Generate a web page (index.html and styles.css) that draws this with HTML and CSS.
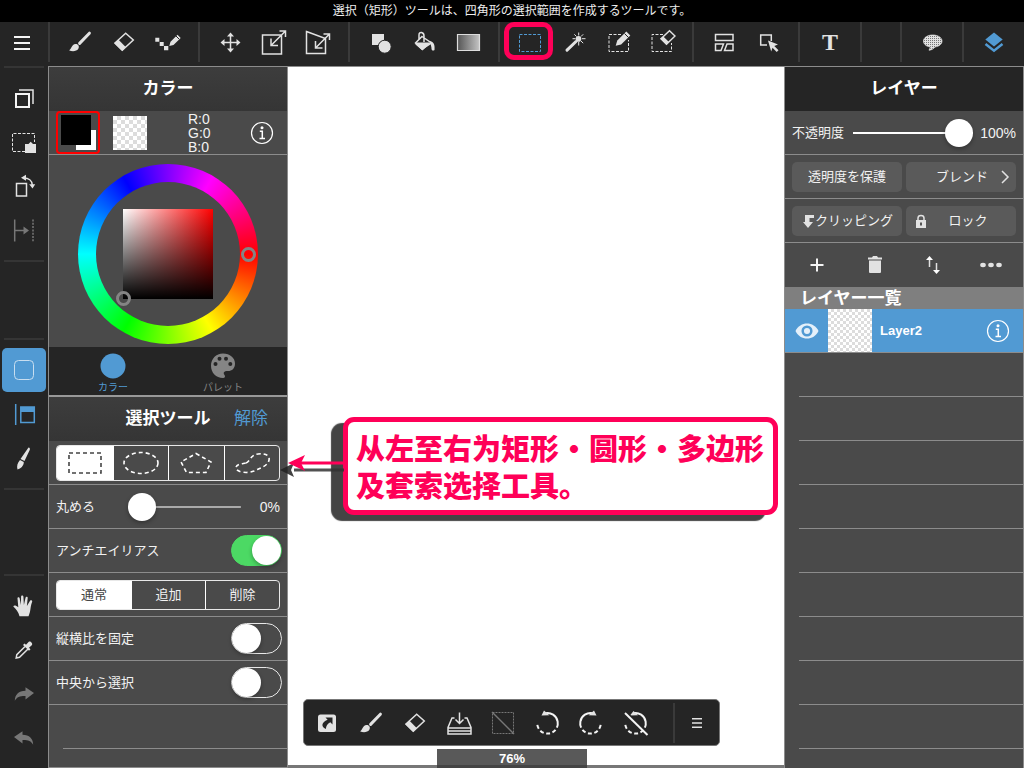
FILE: index.html
```html
<!DOCTYPE html>
<html lang="ja">
<head>
<meta charset="utf-8">
<meta name="viewport" content="width=device-width, initial-scale=1">
<title>選択ツール</title>
<link rel="stylesheet" href="styles.css">
</head>
<body>
<svg class="defs" aria-hidden="true">
  <defs>
    <linearGradient id="fade"><stop offset="0" stop-color="#555"/><stop offset="1" stop-color="#c4c4c4"/></linearGradient>
    <pattern id="dots" width="2" height="2" patternUnits="userSpaceOnUse"><rect width="2" height="2" fill="#e2e2e2"/><rect width="1" height="1" fill="#777"/></pattern>
    <symbol id="brush" viewBox="0 0 28 28"><path class="s3" d="M23.4 5.2 13.6 15.4"/><path class="f" d="M3 22.3c2.6-.6 2.3-6 6.6-6.3 2.7-.1 4.2 2.5 2.6 5-1.6 2.300-5.800 2.800-9.200 1.300z"/></symbol>
    <symbol id="eraser" viewBox="0 0 28 28"><path class="s" d="M15.700 5.200 23.300 12 12.300 22.300 5 15z"/><path class="f" d="M8.500 11.700 15.700 19 12.200 23 4.200 15.300z"/></symbol>
    <symbol id="info" viewBox="0 0 24 24"><circle cx="12" cy="12" r="10.500" fill="none" stroke="#fff" stroke-width="1.200"/><circle cx="12" cy="6.800" r="1.500" fill="#fff"/><path d="M9.800 10.200h2.500V17.500M9.500 17.500h5.500" fill="none" stroke="#fff" stroke-width="1.500"/></symbol>
    <symbol id="undo" viewBox="0 0 28 28"><path d="M4 13 12.500 7.300v3.400c7 .2 10.500 3.800 10.700 10-2.200-3.800-5.200-4.800-10.700-4.700v3.500z" fill="#777"/></symbol>
  </defs>
</svg>
<div class="app">
  <p class="status">選択（矩形）ツールは、四角形の選択範囲を作成するツールです。</p>
  <nav class="toolbar" aria-label="ツール">
    <div class="group menu">
      <button class="tool" aria-label="メニュー"><svg viewBox="0 0 28 28"><path class="s w" d="M6 9h16M6 15h16M6 21h16"/></svg></button>
    </div>
    <div class="group">
      <button class="tool" aria-label="ブラシ"><svg><use href="#brush"/></svg></button>
      <button class="tool" aria-label="消しゴム"><svg><use href="#eraser"/></svg></button>
      <button class="tool" aria-label="ドット"><svg viewBox="0 0 28 28"><path class="f" d="M1.300 9.700h4v4h-4zM5.700 14h4v4h-4zM10 18h4.300v4.300H10zM15.300 18l1.200-4.200 7-7 3.200 3.200-7.200 7z"/><path d="m22 8 3.200 3.200" stroke="#252525"/></svg></button>
    </div>
    <div class="group">
      <button class="tool" aria-label="移動"><svg viewBox="0 0 28 28"><path class="s" d="M14.500 7v15M7 14.500h15"/><path class="f" d="m14.500 4.500 3.500 4h-7zM14.500 24.500l3.500-4h-7zM4.500 14.500l4-3.500v7zM24.500 14.500l-4-3.500v7z"/></svg></button>
      <button class="tool" aria-label="拡大縮小"><svg viewBox="0 0 28 28"><path class="s" d="M2.500 7h19v19h-19zM11 17.500 25.500 3M19.500 3h6v6M11 10.500v7h7"/></svg></button>
      <button class="tool" aria-label="自由変形"><svg viewBox="0 0 28 28"><path class="s" d="M2.500 3.500 21.500 10.500v15h-19zM11.500 20 25.500 6M19.500 6h6v6M11.500 13v7h7"/></svg></button>
    </div>
    <div class="group">
      <button class="tool" aria-label="図形"><svg viewBox="0 0 28 28"><path class="f" d="M6 6h12v11H6z"/><circle cx="18.700" cy="18.700" r="6.500" fill="#e2e2e2" stroke="#252525"/></svg></button>
      <button class="tool" aria-label="バケツ"><svg viewBox="0 0 28 28"><path class="s" d="m12 8.500 9.500 6.500-9.500 6-6.500-6zM9 12V7c0-4 5-3 5 1v6"/><path class="f" d="M6 14.500h15l-8.500 8-7-6zM20 13c4 1 5 4 4.500 9-1.500 1.500-3.500 0-3-2z"/></svg></button>
      <button class="tool" aria-label="グラデーション"><svg viewBox="0 0 28 28"><path d="M3.500 6.500h22v16h-22z" fill="url(#fade)" stroke="#ddd" stroke-width="1.200"/></svg></button>
    </div>
    <div class="group">
      <button class="tool marked" aria-label="選択" aria-pressed="true"><svg viewBox="0 0 28 28"><path d="M3.500 6.500h21v17h-21z" fill="none" stroke="#519ad3" stroke-dasharray="3 1.500"/></svg></button>
      <button class="tool" aria-label="自動選択"><svg viewBox="0 0 28 28"><path class="s3" d="M7 22.200 16 13.500"/><path class="s t" d="M18.700 4.500v3M18.700 14v3.500M12.500 10.700h3M22 10.700h3.500M14.300 6.300l2.200 2.200M23.200 6.300 21 8.500M21 13l2.200 2.200"/><circle class="f" cx="18.500" cy="10.900" r="2.800"/></svg></button>
      <button class="tool" aria-label="選択ペン"><svg viewBox="0 0 28 28"><path class="s d" d="M17 6.500H5v17h19.500V12"/><path class="f" d="m11.700 17.700 1.600-5.200 9-9 4 4-9.200 9z"/><path d="m20.500 5.500 4 4" stroke="#252525"/></svg></button>
      <button class="tool" aria-label="選択消し"><svg viewBox="0 0 28 28"><path class="s d" d="M15 6.500H4v17h19.500V15"/><path class="s" d="M21.500 2.700 27 8l-8.500 8.300L13 10.700z"/><path class="f" d="m15.300 8.500 5.700 5.500-2.500 2.700-6-6z"/></svg></button>
    </div>
    <div class="group">
      <button class="tool" aria-label="コマ割り"><svg viewBox="0 0 28 28"><path class="s" d="M5.500 6.500h17.500v6H5.500zM5.500 16h8l-2.500 6.500H5.500zM17 16h6v6.500h-8.500z"/></svg></button>
      <button class="tool" aria-label="操作"><svg viewBox="0 0 28 28"><path class="s" d="M13 17H6.700V7h10.600v6"/><path class="f" d="m14 12.500 10 4-3.700 1.500 4.200 4.200-1.800 1.800-4.200-4.200-1.300 3.700z"/></svg></button>
    </div>
    <div class="group">
      <button class="tool letter">T</button>
    </div>
    <div class="group filler"></div>
    <div class="group">
      <button class="tool" aria-label="フキダシ"><svg viewBox="0 0 28 28"><path d="M14.700 7c5.200 0 9.300 2.600 9.300 6 0 3.300-3 5.300-7 6-1.500 2-3.500 3-6 3.200l1.500-3.200c-4-.5-7-2.600-7-6 0-3.400 4-6 9.200-6z" fill="url(#dots)" stroke="#e2e2e2" stroke-width=".7"/></svg></button>
    </div>
    <div class="group last">
      <button class="tool" aria-label="レイヤー"><svg viewBox="0 0 28 28"><path d="m14 4.500 8.700 7L14 18.500l-8.700-7z" fill="#519ad3"/><path d="m5.500 16 8.500 6.700 8.500-6.700" fill="none" stroke="#519ad3" stroke-width="2.500"/></svg></button>
    </div>
  </nav>
  <div class="main">
    <aside class="rail">
      <div class="stack">
        <button class="tool" aria-label="コピー"><svg viewBox="0 0 28 28"><path class="s w" d="M6 10h13v13H6z"/><path class="s" d="M9 6h14v14"/></svg></button>
        <button class="tool" aria-label="貼り付け"><svg viewBox="0 0 28 28"><path class="s d" d="M15 23.500H2.500v-18h22V14"/><path class="f" d="M15 16h3.500l2.200-2.200L23 16h3v9H15z"/></svg></button>
        <button class="tool" aria-label="回転"><svg viewBox="0 0 28 28"><path class="s" d="M6.500 11.500h10v12.500h-10zM14 6c4.500 0 8 2.500 8.300 7"/><path class="f" d="m11 5.800 5-3v6zM22.500 16.500l-3.300-4.300h6z"/></svg></button>
        <button class="tool dim" aria-label="スナップ"><svg viewBox="0 0 28 28"><path class="s" d="M4.700 3.500v22M5 14.500h9"/><path class="s" d="M23 3.500v22" stroke-dasharray="2 1.300"/><path class="f" d="m13.500 10.500 5.500 4-5.500 4z"/></svg></button>
      </div>
      <div class="gap-a"></div>
      <div class="stack">
        <button class="tool on" aria-label="選択範囲" aria-pressed="true"><svg viewBox="0 0 28 28"><rect x="4.500" y="4.500" width="19" height="19" rx="4" fill="none" stroke="#c8def0"/></svg></button>
        <button class="tool" aria-label="パネル"><svg viewBox="0 0 28 28"><path d="M5.700 4v21M10.800 7h13.500v15.500H10.800z" fill="none" stroke="#519ad3" stroke-width="1.500"/><path d="M10.500 7h14v5h-14z" fill="#519ad3"/></svg></button>
        <button class="tool" aria-label="ブラシ設定"><svg viewBox="0 0 28 28"><path class="f" d="M18.500 3.500c1.500 0 1.700 1.500 1.200 2.500L14.500 17l-4-2zM10 16l3.800 2c0 4-3 6.500-6.300 7.500-1-3.500 0-6.500 2.500-9.500z"/></svg></button>
      </div>
      <div class="gap-b"></div>
      <div class="stack">
        <button class="tool" aria-label="手のひら"><svg viewBox="0 0 28 28"><path class="f" d="M9.500 24.300C8.500 20 6 17 3.300 14.600c.5-1.600 2.500-1.300 5 .6L7.500 6.500C7.300 5 9.300 4.700 9.600 6l1.300 7 .2-8.500c0-1.500 2.200-1.500 2.300 0l.5 8.500 1.700-7.500c.3-1.400 2.300-1 2.100.4L16.900 14l3.300-5.400c.8-1 2.400-.2 2 1-1.500 4-1.500 6-2 9-.4 2.400-1 4-1.700 5.700z"/></svg></button>
        <button class="tool" aria-label="スポイト"><svg viewBox="0 0 28 28"><path class="s" d="M15 10.500 6.800 18.700 6.200 22l3.300-.7L18 13"/><path class="f" d="m13 9 1.500-1.500 1.500 1.200 2.800-3c1.500-1 4.200 1.600 3.200 3.200l-3 2.800 1.500 1.500-1.500 1.600z"/></svg></button>
        <button class="tool" aria-label="やり直す"><svg class="flip"><use href="#undo"/></svg></button>
        <button class="tool" aria-label="取り消す"><svg><use href="#undo"/></svg></button>
      </div>
    </aside>

    <aside class="panel left">
      <header class="head"><span></span><h2>カラー</h2><span></span></header>
      <div class="row swatches">
        <button class="current" aria-label="描画色"><span class="back"></span><span class="front"></span></button>
        <button class="clear checker" aria-label="透明"></button>
        <p class="rgb">R:0<br>G:0<br>B:0</p>
        <button class="round" aria-label="情報"><svg><use href="#info"/></svg></button>
      </div>
      <div class="picker">
        <div class="wheel">
          <div class="hole"><div class="square"><span class="knob sv"></span></div></div>
          <span class="knob hue"></span>
        </div>
      </div>
      <div class="tabs">
        <button class="tab active"><svg viewBox="0 0 28 28"><circle cx="14" cy="14" r="12.500" fill="#519ad3"/></svg>カラー</button>
        <button class="tab"><svg viewBox="0 0 28 28"><path d="M14 1.500c7 0 12 4.500 12 10 0 5-3 7.500-7 7.500-4.500 0-5 2-3.500 4 1 1.500.5 3-1.500 3-7 0-12-5.500-12-12.300C2 7 7 1.500 14 1.500z" fill="#858585"/><g fill="#252525"><circle cx="6.500" cy="12" r="2"/><circle cx="10.500" cy="6.700" r="2"/><circle cx="17" cy="6.700" r="2"/><circle cx="21.300" cy="12" r="2"/></g></svg>パレット</button>
      </div>
      <header class="head"><span></span><h2>選択ツール</h2><button class="release">解除</button></header>
      <div class="row">
        <div class="segments tall">
          <button class="seg picked" aria-label="矩形"><svg viewBox="0 0 40 28"><rect x="4" y="4" width="32" height="20" fill="none" stroke="#444" stroke-width="1.600" stroke-dasharray="4 3"/></svg></button>
          <button class="seg" aria-label="楕円"><svg viewBox="0 0 40 28"><ellipse class="m" cx="20" cy="14" rx="17" ry="10.500"/></svg></button>
          <button class="seg" aria-label="多角形"><svg viewBox="0 0 40 28"><path class="m" d="m20 4.500 15 8.500-5 10.500H10.500L5 13z"/></svg></button>
          <button class="seg" aria-label="投げ縄"><svg viewBox="0 0 40 28"><path class="m" d="M14 14c4-1 4-8 12-9 8-1 12 2 11 6-1 6-9 8-15 11-7 3-18 1-18-3s6-4 10-5z"/></svg></button>
        </div>
      </div>
      <div class="row">
        <label for="round">丸める</label>
        <input class="slider rounding" id="round" type="range" min="0" max="100" value="0">
        <output class="value" for="round">0%</output>
      </div>
      <div class="row toggle"><label for="aa">アンチエイリアス</label><input class="switch" id="aa" type="checkbox" checked></div>
      <div class="row">
        <div class="segments three">
          <button class="seg picked">通常</button><button class="seg">追加</button><button class="seg">削除</button>
        </div>
      </div>
      <div class="row toggle"><label for="ratio">縦横比を固定</label><input class="switch" id="ratio" type="checkbox"></div>
      <div class="row toggle"><label for="center">中央から選択</label><input class="switch" id="center" type="checkbox"></div>
      <div class="blank"></div>
      <div class="blank-end"></div>
    </aside>

    <main class="canvas">
      <div class="callout" lang="zh-Hans">
        <p>从左至右为矩形<span class="dot">·</span>圆形<span class="dot">·</span>多边形</p>
        <p>及套索选择工具。</p>
        <svg class="arrow" viewBox="0 0 64 28"><g fill="#222" stroke="#333" opacity=".85"><path d="M14 18h50" stroke-width="3"/><path d="m0 18 14-7-3 7 3 7z" stroke="none"/></g><g fill="#ff0058" stroke="#ff0058"><path d="M18 11h46" stroke-width="3"/><path d="m8 11 17-8-4 8 4 8z" stroke="none"/></g></svg>
      </div>
      <div class="dock">
        <div class="quick">
          <button class="tool" aria-label="ショートカット"><svg viewBox="0 0 28 28"><rect class="f" x="5" y="5.500" width="18" height="17.500" rx="2.500"/><path d="M12.500 8.500h7v7l-2.200-2.200c-3 1.500-4 3.500-4.500 6.700-5-2.500-4.500-6.500 1.800-9.300z" fill="#252525"/></svg></button>
          <button class="tool" aria-label="ブラシ"><svg><use href="#brush"/></svg></button>
          <button class="tool" aria-label="消しゴム"><svg><use href="#eraser"/></svg></button>
          <button class="tool" aria-label="保存"><svg viewBox="0 0 28 28"><path class="s" d="M9.500 9H7L3 18.500V25h23v-6.500L22 9h-2.500M3 19h23M3 22h23M14.500 3.500v11M10.500 10.500l4 4 4-4"/></svg></button>
          <button class="tool dim" aria-label="選択解除"><svg viewBox="0 0 28 28"><rect class="s t" x="3.500" y="3.500" width="21" height="21" stroke-dasharray="2 1"/><path class="s" d="m3 3 22 22"/></svg></button>
          <button class="tool" aria-label="左回転"><svg viewBox="0 0 28 28"><path class="s w" d="M12 4.300A10.300 10.300 0 1 1 4.200 14.500" stroke-dasharray="23 2.500 4 2.500 4 2.500 4 2.500 4 2.500"/><path class="f" d="m8.500 6.500 2.500-5 5.300 4.800z"/></svg></button>
          <button class="tool" aria-label="右回転"><svg viewBox="0 0 28 28" class="flip"><path class="s w" d="M12 4.300A10.300 10.300 0 1 1 4.200 14.500" stroke-dasharray="23 2.500 4 2.500 4 2.500 4 2.500 4 2.500"/><path class="f" d="m8.500 6.500 2.500-5 5.300 4.800z"/></svg></button>
          <button class="tool" aria-label="回転リセット"><svg viewBox="0 0 28 28"><path class="s w" d="M12 4.300A10.300 10.300 0 1 1 4.200 14.500" stroke-dasharray="23 2.500 4 2.500 4 2.500 4 2.500 4 2.500"/><path class="f" d="m9 6.500 3.500-4.500 4.500 4.300z"/><path d="M5.500 3.500 28 25.500" stroke="#252525" stroke-width="2"/><path class="s w" d="m4 4 22.500 22"/></svg></button>
          <button class="tool more" aria-label="メニュー"><svg viewBox="0 0 28 28"><path class="s" d="M9 9.700h10M9 14h10M9 18.300h10"/></svg></button>
        </div>
        <p class="zoom">76%</p>
      </div>
    </main>

    <aside class="panel right">
      <header class="head dark"><span></span><h2>レイヤー</h2><span></span></header>
      <div class="row">
        <label for="opacity">不透明度</label>
        <input class="slider full" id="opacity" type="range" min="0" max="100" value="100">
        <output class="value" for="opacity">100%</output>
      </div>
      <div class="row pair">
        <button class="btn">透明度を保護</button>
        <button class="btn next"><span class="word">ブレンド</span><svg viewBox="0 0 14 14"><path class="s" d="m4 1 6 6-6 6"/></svg></button>
      </div>
      <div class="row pair">
        <button class="btn"><svg viewBox="0 0 14 14"><path class="f" d="M4 1h9v3H8.500v4H12l-5 6-5-6h2z"/></svg>クリッピング</button>
        <button class="btn"><svg viewBox="0 0 14 14"><path class="f" d="M2 6h10v8H2z"/><path class="s" d="M4 6V4c0-3.500 6-3.500 6 0v2"/><path d="M7 8.500v3" stroke="#555" stroke-width="2"/></svg><span class="word">ロック</span></button>
      </div>
      <div class="actions">
        <button aria-label="追加"><svg viewBox="0 0 28 28"><path class="s w" d="M14 7.500v13M7.500 14h13"/></svg></button>
        <button aria-label="削除"><svg viewBox="0 0 28 28"><path class="f" d="M7 6.500h4L12 5h4l1 1.500h4v2H7zM8 9.500h12V21q0 1-1 1H9q-1 0-1-1z"/></svg></button>
        <button aria-label="並べ替え"><svg viewBox="0 0 28 28"><path class="s" d="M10.500 8v8M17.500 12v8"/><path d="m10.500 5 3.500 4h-7zM17.500 23l3.500-4h-7z" fill="#fff"/></svg></button>
        <button aria-label="その他"><svg viewBox="0 0 28 28"><g class="f"><ellipse cx="6" cy="14" rx="2.800" ry="2.200"/><ellipse cx="14" cy="14" rx="2.800" ry="2.200"/><ellipse cx="22" cy="14" rx="2.800" ry="2.200"/></g></svg></button>
      </div>
      <h3 class="list-title">レイヤー一覧</h3>
      <div class="layer">
        <button class="eye" aria-label="表示"><svg viewBox="0 0 28 28"><path d="M2.500 14C7 4 21 4 25.500 14 21 24 7 24 2.500 14z" fill="#e4f0fa"/><circle cx="14" cy="14" r="4.300" fill="none" stroke="#519ad3" stroke-width="2.500"/></svg></button>
        <span class="thumb checker fine"></span>
        <span class="name">Layer2</span>
        <button class="round" aria-label="レイヤー情報"><svg><use href="#info"/></svg></button>
      </div>
      <div class="lines"></div>
    </aside>
  </div>
</div>
</body>
</html>
```
FILE: styles.css
```css
* { box-sizing: border-box; }
body {
  margin: 0;
  background: #252525;
  color: #f2f2f2;
  font: 13px/16px "Liberation Sans", "Noto Sans CJK JP", sans-serif;
}
p, h2, h3 { margin: 0; }
button {
  margin: 0;
  padding: 0;
  border: 0;
  background: none;
  color: inherit;
  font: inherit;
}
svg { display: block; width: 28px; height: 28px; flex: none; }
.defs { position: absolute; width: 0; height: 0; }
.f { fill: #e2e2e2; }
.s { fill: none; stroke: #e2e2e2; stroke-width: 1.5; }
.s.t { stroke-width: 1; }
.s.d { stroke-width: 1; stroke-dasharray: 3 1.5; }
.s.w { stroke: #f4f4f4; stroke-width: 2; }
.s3 { fill: none; stroke: #e2e2e2; stroke-width: 3; stroke-linecap: round; }
.m { fill: none; stroke: #fff; stroke-width: 1.6; stroke-dasharray: 4 3; }
.flip { transform: scaleX(-1); }
.dim .f { fill: #777; }
.dim .s { stroke: #777; }

.app { display: flex; flex-direction: column; min-height: 100vh; }
.status {
  height: 22px;
  background: #000;
  color: #eee;
  font-size: 12px;
  line-height: 23px;
  text-align: center;
}

.toolbar { display: flex; padding-bottom: 4px; }
.group { display: flex; padding: 0 8px; border-right: 2px solid #3a3a3a; }
.group.menu { padding: 0 4px 0 0; }
.group.filler { flex: 1; }
.group.last { border: 0; }
.tool {
  display: flex;
  align-items: center;
  justify-content: center;
  width: 44px;
  height: 44px;
}
.toolbar .tool { height: 40px; }
.letter { font: bold 24px/24px "Liberation Serif", serif; color: #e2e2e2; }
.marked { position: relative; }
.marked::after {
  content: "";
  position: absolute;
  inset: 0 -1px 2px -4px;
  border: 5px solid #ff0058;
  border-radius: 10px;
}

.main { flex: 1; display: flex; }
.rail { display: flex; flex-direction: column; align-items: center; width: 48px; }
.stack { width: 40px; padding: 8px 0; border-top: 2px solid #353535; display: flex; flex-direction: column; align-items: center; }
.gap-a, .gap-b { width: 40px; border-top: 2px solid #353535; }
.gap-a { flex: 19; }
.gap-b { flex: 21; }
.tool.on { background: #519ad3; border-radius: 5px; }

.panel {
  display: flex;
  flex-direction: column;
  width: 240px;
  background: #4a4a4a;
  border: solid #8c8c8c;
  border-width: 1px 1px 0;
}
.head {
  display: grid;
  grid-template-columns: 1fr auto 1fr;
  align-items: center;
  height: 44px;
  background: linear-gradient(#3d3d3d, #353535);
}
.head.dark { background: #252525; }
.head h2 { font-size: 17px; line-height: 24px; color: #fff; }
.release { justify-self: end; margin-right: 19px; color: #519ad3; font-size: 17px; line-height: 24px; }
.row {
  display: flex;
  align-items: center;
  height: 44px;
  padding: 0 7px;
  border-bottom: 1px solid #8c8c8c;
}
.checker {
  background: repeating-conic-gradient(#dcdcdc 0 25%, #fff 0 50%) 0 0 / 8px 8px;
}
.checker.fine { background-size: 6px 6px; }
.swatches { justify-content: space-between; padding-right: 13px; }
.current {
  display: grid;
  grid-template-columns: 15px 15px 5px;
  grid-template-rows: 15px 15px 5px;
  padding: 2px 2px 2px 3px;
  border: 2px solid #f00;
  border-radius: 4px;
}
.front { grid-area: 1 / 1 / 3 / 3; background: #000; }
.back { grid-area: 2 / 2 / 4 / 4; background: #fff; }
.clear { width: 34px; height: 34px; margin-left: 13px; margin-right: 41px; }
.rgb { flex: 1; font-size: 14px; line-height: 14px; }
.round svg { width: 24px; height: 24px; }

.picker { display: flex; justify-content: center; padding: 9px 0 3px; }
.wheel {
  position: relative;
  display: grid;
  width: 180px;
  height: 180px;
  padding: 18px;
  border-radius: 50%;
  background: conic-gradient(from 90deg, #f00, #ff0, #0f0, #0ff, #00f, #f0f, #f00);
}
.hole { display: grid; place-items: center; border-radius: 50%; background: #4a4a4a; }
.square {
  position: relative;
  width: 90px;
  height: 90px;
  background: linear-gradient(transparent, #000), linear-gradient(90deg, #fff, #f00);
}
.knob { position: absolute; width: 15px; height: 15px; border: 3px solid #848484; border-radius: 50%; }
.sv { left: -7px; bottom: -7px; }
.hue { right: 2px; top: 83px; }

.tabs { display: grid; grid-template-columns: 1fr 1fr; padding: 0 9px; background: #252525; border-bottom: 2px solid #999; }
.tab {
  display: flex;
  flex-direction: column;
  align-items: center;
  height: 48px;
  padding-top: 5px;
  color: #858585;
  font-size: 10px;
  line-height: 16px;
}
.tab.active { color: #519ad3; }

.segments {
  display: grid;
  grid-template-columns: repeat(4, 1fr);
  width: 100%;
  border: 1px solid #e8e8e8;
  border-radius: 4px;
  overflow: hidden;
}
.segments.three { grid-template-columns: repeat(3, 1fr); }
.seg { display: grid; place-items: center; height: 28px; line-height: 28px; }
.tall .seg { height: 34px; }
.seg svg { width: 40px; }
.seg + .seg { border-left: 1px solid #fff; }
.picked { background: #fff; color: #444; }

.slider {
  -webkit-appearance: none;
  appearance: none;
  height: 28px;
  margin: 0;
  min-width: 0;
}
.value { font-size: 14px; }
.rounding { flex: 1; margin: 0 19px 0 33px; background: linear-gradient(#aaa, #aaa) center / 100% 2px no-repeat; }
.full { flex: 1; margin: 0 7px 0 9px; background: linear-gradient(#fff, #fff) center / 100% 2px no-repeat; }
.slider::-webkit-slider-thumb {
  -webkit-appearance: none;
  width: 28px;
  height: 28px;
  border-radius: 50%;
  background: #fff;
  box-shadow: 0 2px 4px rgba(0, 0, 0, .3);
}
.toggle { justify-content: space-between; padding-right: 5px; }
.switch {
  -webkit-appearance: none;
  appearance: none;
  display: flex;
  width: 51px;
  height: 31px;
  margin: 0;
  border: 1px solid #e8e8e8;
  border-radius: 16px;
}
.switch::before {
  content: "";
  width: 29px;
  height: 29px;
  border-radius: 50%;
  background: #fff;
  box-shadow: 0 2px 4px rgba(0, 0, 0, .3);
}
.switch:checked { justify-content: flex-end; background: #4cd964; border-color: #4cd964; }
.blank { height: 44px; margin-left: 14px; border-bottom: 1px solid #8c8c8c; }
.blank-end { flex: 1; border-bottom: 1px solid #8c8c8c; }

.canvas {
  position: relative;
  flex: 1;
  display: flex;
  flex-direction: column;
  justify-content: flex-end;
  background: #fff;
  border-top: 1px solid #8c8c8c;
}
.callout {
  position: absolute;
  z-index: 1;
  left: 55px;
  right: 6px;
  top: 350px;
  padding: 7px 7px 7px 8px;
  background: #fff;
  border: 5px solid #ff0058;
  border-radius: 11px;
  box-shadow: -12px 6px 1px #444;
  color: #ff0058;
  font: 900 29px/37px "Noto Sans CJK SC", sans-serif;
  white-space: nowrap;
}
.dot { display: inline-block; width: 30px; text-align: center; }
.arrow { position: absolute; right: 100%; top: 30px; width: 64px; margin-right: 4px; }
.dock {
  display: flex;
  flex-direction: column;
  align-items: center;
  gap: 3px;
  padding-right: 48px;
  border-bottom: 3px solid #777;
}
.quick {
  display: flex;
  align-items: center;
  height: 47px;
  padding-left: 1px;
  margin-right: 1px;
  background: #252525;
  border: 1px solid #777;
  border-radius: 5px;
}
.more { width: 46px; height: 40px; margin-left: 16px; border-left: 2px solid #3a3a3a; }
.zoom {
  width: 150px;
  height: 19px;
  margin-bottom: -3px;
  background: #595959;
  border-bottom: 3px solid #444;
  color: #fff;
  font-weight: bold;
  line-height: 19px;
  text-align: center;
}

.pair { display: grid; grid-template-columns: 1fr 1fr; gap: 4px; }
.btn {
  display: flex;
  align-items: center;
  justify-content: center;
  height: 30px;
  padding: 0 8px;
  background: #5a5a5a;
  border-radius: 5px;
}
.btn.next { padding: 0 4px 0 20px; }
.btn svg { width: 14px; height: 14px; }
.word { flex: 1; text-align: center; }
.actions { display: grid; grid-template-columns: repeat(4, 1fr); height: 44px; padding: 0 3px; }
.actions button { display: grid; place-items: center; }
.list-title { height: 22px; padding-left: 15px; background: #7f7f7f; color: #fff; font-size: 17px; line-height: 24px; }
.layer { display: flex; align-items: center; height: 44px; background: #519ad3; border-bottom: 1px solid #8c8c8c; }
.eye { display: grid; place-items: center; width: 43px; }
.thumb { align-self: stretch; width: 44px; }
.name { flex: 1; padding-left: 8px; color: #fff; font-weight: bold; }
.layer .round { margin-right: 13px; }
.lines {
  flex: 1;
  margin-left: 14px;
  background: repeating-linear-gradient(transparent 0 43px, #8c8c8c 43px 44px);
}
```
